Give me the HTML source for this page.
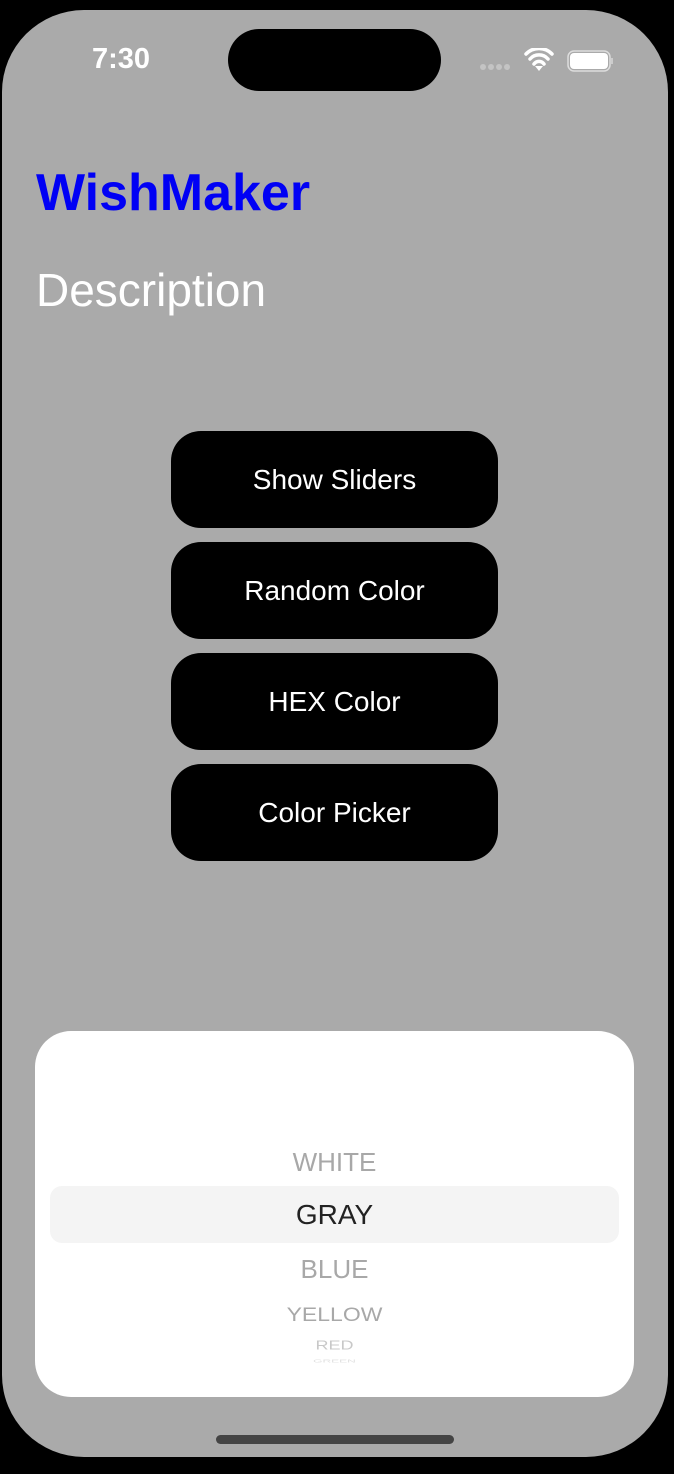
<!DOCTYPE html>
<html><head><style>
html,body{margin:0;padding:0;width:674px;height:1474px;background:#000;overflow:hidden;font-family:"Liberation Sans",sans-serif;}
.screen{position:absolute;left:2px;top:10px;width:666px;height:1447px;border-radius:82px;background:#aaaaaa;}
.island{position:absolute;left:228px;top:29px;width:213px;height:62px;border-radius:31px;background:#000;}
.time{position:absolute;left:92px;top:43px;font-size:29px;color:#fff;font-weight:bold;}
.title{position:absolute;left:36px;top:163px;font-size:52px;color:#0000f5;font-weight:bold;}
.desc{position:absolute;left:36px;top:263px;font-size:46px;color:#fff;}
.btn{position:absolute;left:171px;width:327px;height:97px;border-radius:30px;background:#000;color:#fff;font-size:28px;text-align:center;line-height:97px;}
.card{position:absolute;left:35px;top:1031px;width:599px;height:366px;border-radius:36px;background:#fff;}
.sel{position:absolute;left:15px;top:155px;width:569px;height:57px;border-radius:12px;background:#f4f4f4;}
.it{position:absolute;left:0;width:599px;text-align:center;color:#a8a8a8;}
.home{position:absolute;left:216px;top:1435px;width:238px;height:9px;border-radius:5px;background:#444;}
</style></head><body>
<div class="screen"></div>
<div class="island"></div>
<div class="time">7:30</div>
<svg style="position:absolute;left:478px;top:48px" width="140" height="26">
<g fill="#c4c4c4"><circle cx="5" cy="19" r="3"/><circle cx="13" cy="19" r="3"/><circle cx="21" cy="19" r="3"/><circle cx="29" cy="19" r="3"/></g>
<path d="M48 6a18 18 0 0 1 26 0M52 11a12 12 0 0 1 18 0M56 16a6 6 0 0 1 10 0" stroke="#fff" stroke-width="3.5" fill="none" stroke-linecap="round"/>
<path d="M57 18l4 5 4-5z" fill="#fff"/>
<rect x="90" y="3" width="42" height="20" rx="6" fill="none" stroke="#ddd" stroke-width="1.5"/>
<rect x="92" y="5" width="38" height="16" rx="4" fill="#fff"/>
<rect x="133" y="10" width="2" height="6" fill="#ccc"/>
</svg>
<div class="title">WishMaker</div>
<div class="desc">Description</div>
<div class="btn" style="top:431px">Show Sliders</div>
<div class="btn" style="top:542px">Random Color</div>
<div class="btn" style="top:653px">HEX Color</div>
<div class="btn" style="top:764px">Color Picker</div>
<div class="card">
<div class="sel"></div>
<div class="it" style="top:116px;font-size:26px">WHITE</div>
<div class="it" style="top:168px;font-size:28px;color:#222">GRAY</div>
<div class="it" style="top:223px;font-size:26px">BLUE</div>
<div class="it" style="top:270px;font-size:23px;transform:scaleY(0.85)">YELLOW</div>
<div class="it" style="top:304px;font-size:18px;color:#c8c8c8;transform:scaleY(0.7)">RED</div>
<div class="it" style="top:323px;font-size:12px;color:#e0e0e0;transform:scaleY(0.4)">GREEN</div>
</div>
<div class="home"></div>
</body></html>
